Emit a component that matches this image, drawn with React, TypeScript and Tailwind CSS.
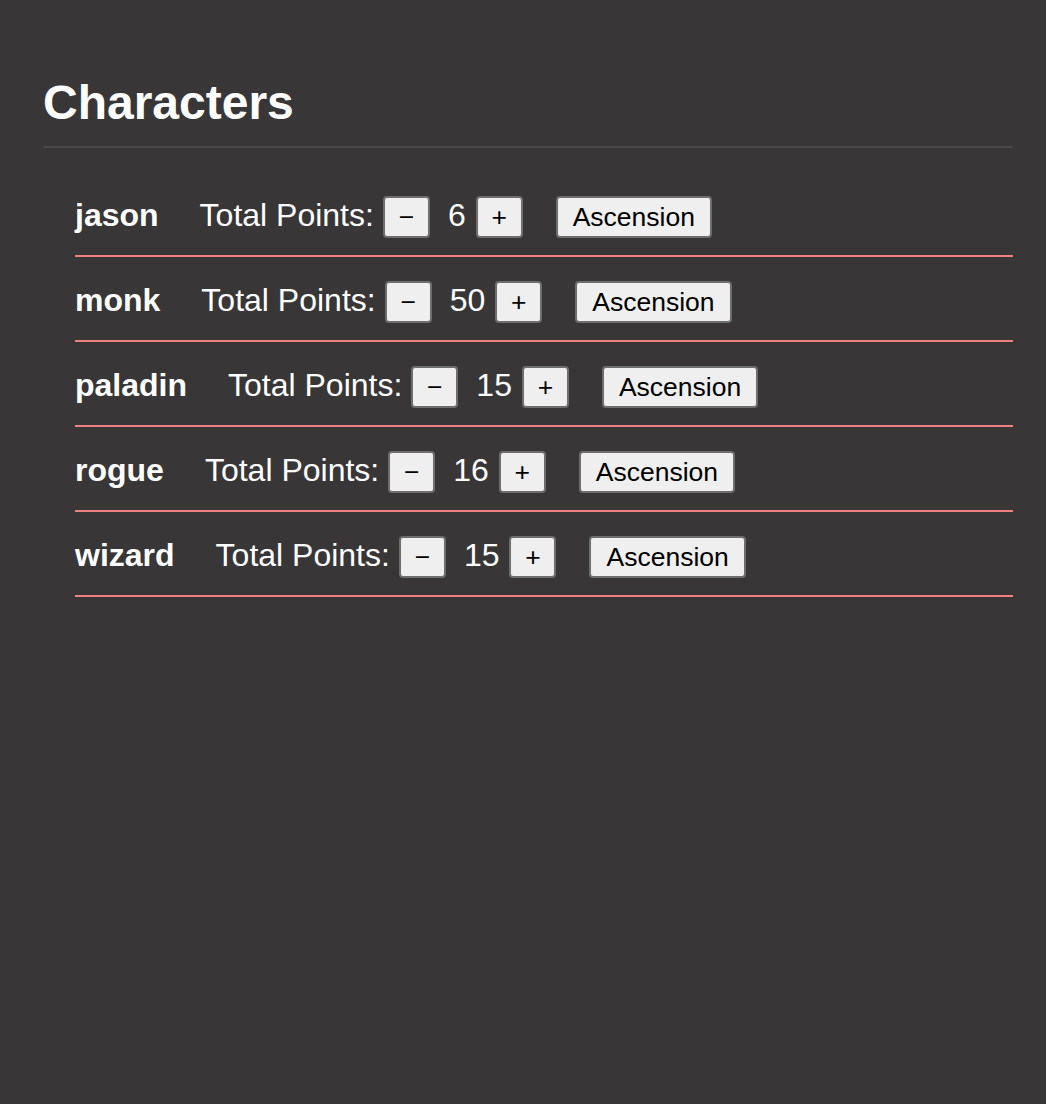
import React from "react";

const characters = [
  { name: "jason", points: 6 },
  { name: "monk", points: 50 },
  { name: "paladin", points: 15 },
  { name: "rogue", points: 16 },
  { name: "wizard", points: 15 },
];

const btn =
  "h-[42px] rounded-[4px] border-2 border-[#6e6e6e] bg-[#efefef] py-[4px] text-[26.5px] leading-[30px] text-black";

const CharacterRow = ({ name, points }: { name: string; points: number }) => {
  return (
    <li className="flex items-baseline border-b-2 border-[#f08080] pt-[24px] pb-[17px]">
      <span className="mr-[41px] text-[32px] leading-none font-bold">{name}</span>
      <span className="mr-[9px] text-[32px] leading-none">Total Points:</span>
      <button className={`${btn} w-[47px]`}>−</button>
      <span className="mr-[10px] ml-[18px] text-[32px] leading-none">{points}</span>
      <button className={`${btn} w-[47px]`}>+</button>
      <button className={`${btn} ml-[33px] px-[15px]`}>Ascension</button>
    </li>
  );
};

const App = () => {
  return (
    <div
      className="min-h-[1104px] bg-[#383637] pt-[76px] pr-[33px] pl-[43px] text-white"
      style={{ fontFamily: '"Liberation Sans", Arial, sans-serif' }}
    >
      <h1 className="border-b-2 border-[#4a4849] pb-[16px] text-[48px] leading-[54px] font-bold">
        Characters
      </h1>
      <ul className="mt-[24px] pl-[32px]">
        {characters.map((c) => (
          <CharacterRow key={c.name} name={c.name} points={c.points} />
        ))}
      </ul>
    </div>
  );
};

export default App;
